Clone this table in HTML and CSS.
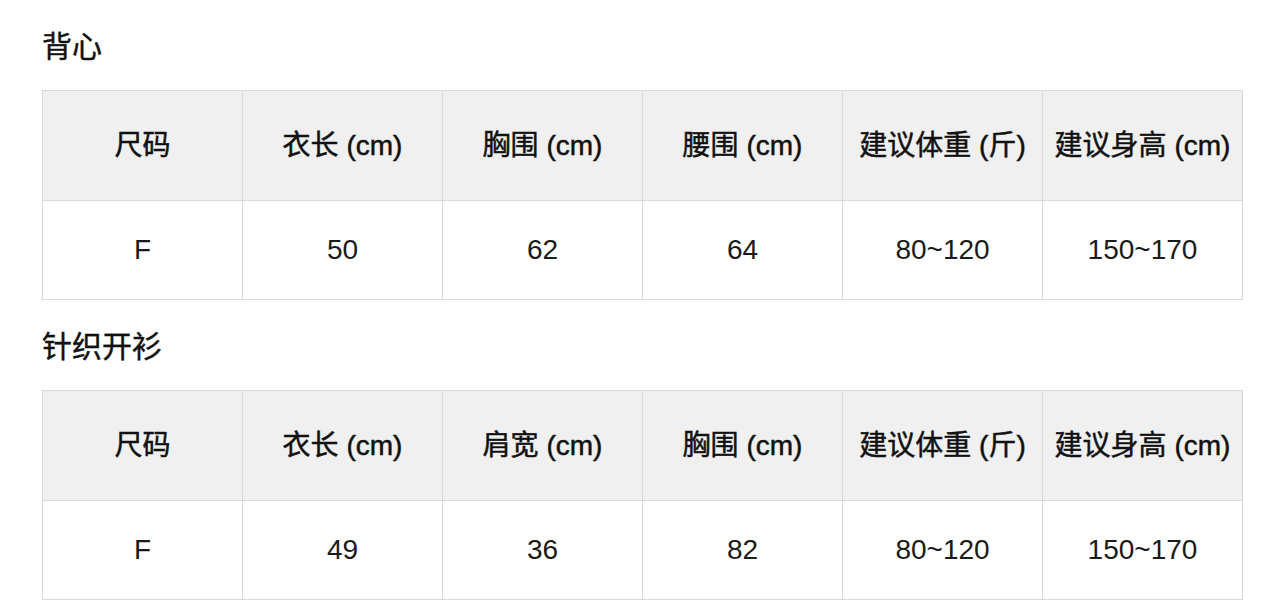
FILE: index.html
```html
<!DOCTYPE html>
<html lang="zh-CN">
<head>
<meta charset="utf-8">
<title>尺码表</title>
<link rel="stylesheet" href="styles.css">
</head>
<body>
<main class="page">
  <section class="section">
    <h2 class="title">背心</h2>
    <div class="grid">
      <div class="cell head">尺码</div>
      <div class="cell head">衣长 (cm)</div>
      <div class="cell head">胸围 (cm)</div>
      <div class="cell head">腰围 (cm)</div>
      <div class="cell head">建议体重 (斤)</div>
      <div class="cell head">建议身高 (cm)</div>
      <div class="cell">F</div>
      <div class="cell">50</div>
      <div class="cell">62</div>
      <div class="cell">64</div>
      <div class="cell">80~120</div>
      <div class="cell">150~170</div>
    </div>
  </section>
  <section class="section">
    <h2 class="title">针织开衫</h2>
    <div class="grid">
      <div class="cell head">尺码</div>
      <div class="cell head">衣长 (cm)</div>
      <div class="cell head">肩宽 (cm)</div>
      <div class="cell head">胸围 (cm)</div>
      <div class="cell head">建议体重 (斤)</div>
      <div class="cell head">建议身高 (cm)</div>
      <div class="cell">F</div>
      <div class="cell">49</div>
      <div class="cell">36</div>
      <div class="cell">82</div>
      <div class="cell">80~120</div>
      <div class="cell">150~170</div>
    </div>
  </section>
</main>
</body>
</html>
```
FILE: styles.css
```css
html, body {
  margin: 0;
  padding: 0;
  background: #ffffff;
}
body {
  font-family: "Liberation Sans", "Noto Sans CJK SC", sans-serif;
  color: #1a1a1a;
}
.page {
  padding: 0 42px;
}
.section {
  display: flex;
  flex-direction: column;
}
.title {
  margin: 0;
  height: 90px;
  box-sizing: border-box;
  padding-bottom: 2px;
  display: flex;
  align-items: center;
  font-size: 30px;
  font-weight: 400;
  color: #111111;
  -webkit-text-stroke: 0.4px #111111;
}
.grid {
  display: grid;
  grid-template-columns: repeat(6, 200px);
  grid-template-rows: 110px 99px;
  border-left: 1px solid #d9d9d9;
  border-top: 1px solid #d9d9d9;
  width: max-content;
}
.cell {
  box-sizing: border-box;
  border-right: 1px solid #d9d9d9;
  border-bottom: 1px solid #d9d9d9;
  display: flex;
  align-items: center;
  justify-content: center;
  font-size: 28px;
  color: #1a1a1a;
  background: #ffffff;
  white-space: nowrap;
}
.head {
  background: #f0f0f0;
  padding-bottom: 5px;
  color: #111111;
  -webkit-text-stroke: 0.5px #111111;
}
```
